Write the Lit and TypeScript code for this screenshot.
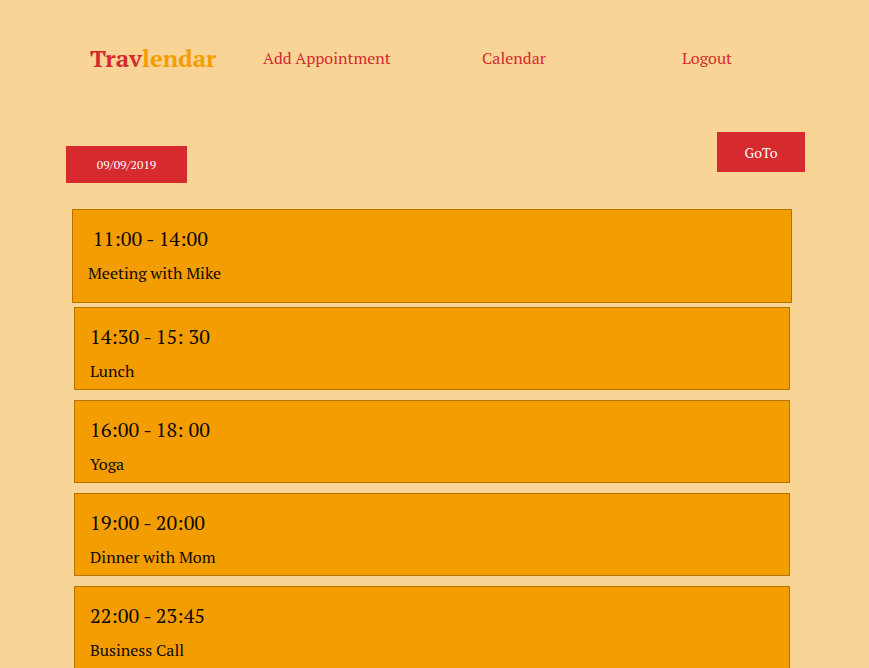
import { LitElement, html, css } from "lit";
import { customElement, property } from "lit/decorators.js";
import { classMap } from "lit/directives/class-map.js";

interface Appointment {
  time: string;
  title: string;
  current?: boolean;
}

const appointments: Appointment[] = [
  { time: " 11:00 - 14:00", title: "Meeting with Mike", current: true },
  { time: "14:30 - 15: 30", title: "Lunch" },
  { time: "16:00 - 18: 00", title: "Yoga" },
  { time: "19:00 - 20:00", title: "Dinner with Mom" },
  { time: "22:00 - 23:45", title: "Business Call" },
];

@customElement("appointment-card")
class AppointmentCard extends LitElement {
  @property({ attribute: false }) appointment!: Appointment;

  static styles = css`
    :host {
      display: block;
    }
    .card {
      box-sizing: border-box;
      min-height: 83px;
      padding: 15px 15px 6px;
      border: 1px solid #b67500;
      background: #f49d00;
      color: #0c0a06;
    }
    .current {
      min-height: 94px;
      margin: 0 -2px;
    }
    .time {
      margin: 0 0 8px;
      font-size: 20px;
      font-weight: 400;
      line-height: 28px;
      white-space: pre;
    }
    .title {
      margin: 0;
      font-size: 16px;
      line-height: 24px;
    }
  `;

  render() {
    const { time, title, current } = this.appointment;
    return html`
      <article class=${classMap({ card: true, current: !!current })}>
        <h2 class="time">${time}</h2>
        <p class="title">${title}</p>
      </article>
    `;
  }
}

@customElement("app-root")
class AppRoot extends LitElement {
  static styles = css`
    :host {
      display: block;
      box-sizing: border-box;
      min-height: 100vh;
      background: #f8d596;
      font-family: "PT Serif", "Liberation Serif", serif;
    }
    .nav {
      display: grid;
      grid-template-columns: 173fr 219fr 200fr 187fr;
      align-items: center;
      padding: 42px 0 0 90px;
    }
    .brand {
      font-size: 24px;
      font-weight: 700;
      line-height: 32px;
      color: #d42a2e;
      text-decoration: none;
    }
    .accent {
      color: #f49d00;
    }
    .link {
      justify-self: start;
      font-size: 16px;
      line-height: 24px;
      color: #d62a2e;
      text-decoration: none;
    }
    .toolbar {
      display: flex;
      justify-content: space-between;
      align-items: flex-start;
      padding: 58px 64px 0 66px;
    }
    .button {
      padding: 0;
      border: 0;
      border-radius: 0;
      background: #d62a2e;
      color: #fff;
      font-family: inherit;
    }
    .date {
      width: 121px;
      height: 37px;
      margin-top: 14px;
      font-size: 12px;
    }
    .goto {
      width: 88px;
      height: 40px;
      font-size: 14px;
    }
    .list {
      display: flex;
      flex-direction: column;
      gap: 10px;
      margin: 0;
      padding: 26px 79px 0 74px;
      list-style: none;
    }
    .first {
      margin-bottom: -6px;
    }
  `;

  render() {
    return html`
      <nav class="nav">
        <a class="brand" href="#">Trav<span class="accent">lendar</span></a>
        <a class="link" href="#add">Add Appointment</a>
        <a class="link" href="#calendar">Calendar</a>
        <a class="link" href="#logout">Logout</a>
      </nav>
      <main>
        <div class="toolbar">
          <button class="button date" type="button">09/09/2019</button>
          <button class="button goto" type="button">GoTo</button>
        </div>
        <ul class="list">
          ${appointments.map(
            (item) => html`
              <li class=${classMap({ first: !!item.current })}>
                <appointment-card .appointment=${item}></appointment-card>
              </li>
            `
          )}
        </ul>
      </main>
    `;
  }
}
